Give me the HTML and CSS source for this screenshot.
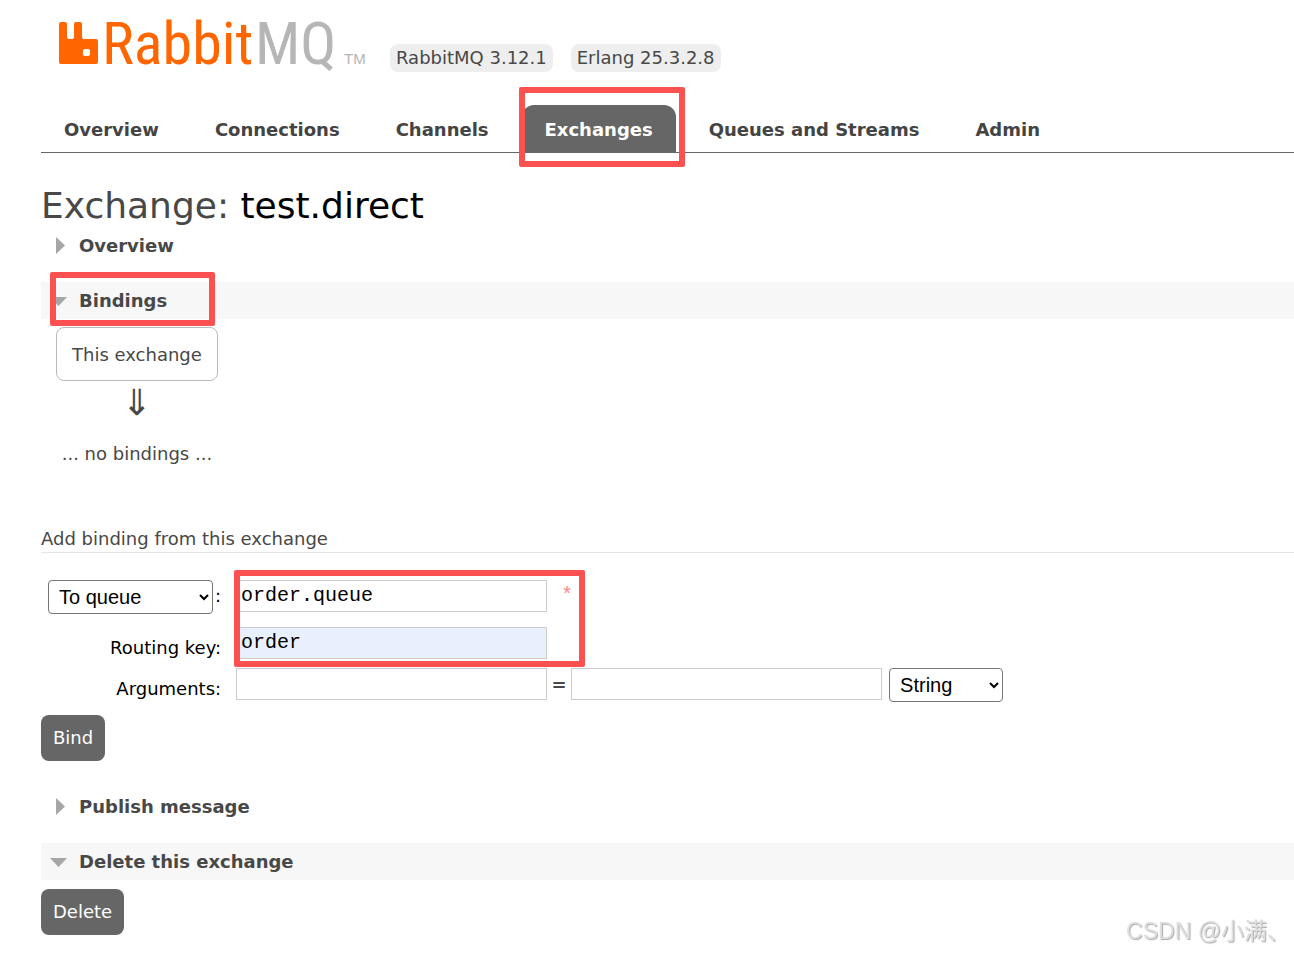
FILE: index.html
```
<!DOCTYPE html>
<html lang="en">

<head>
    <meta charset="UTF-8">
    <meta name="viewport" content="width=device-width, initial-scale=1.0">
    <title>RabbitMQ Management</title>
    <link rel="stylesheet" href="styles.css">
</head>

<body>
    <header>
        <div class="top">
            <a href="#" class="logo">
                <svg width="310" height="60" viewBox="0 0 310 60" role="img" aria-label="RabbitMQ">
                    <path fill="#ff6600" fill-rule="evenodd" d="M3 8h4q2 0 2 2v13q0 2 2 2h3q2 0 2-2V10q0-2 2-2h4q2 0 2 2v13q0 2 2 2h12q2 0 2 2v21q0 2-2 2H3q-2 0-2-2V10q0-2 2-2zM27 35q-2 0-2 2v3q0 2 2 2h3q2 0 2-2v-3q0-2-2-2z" />
                    <text x="44" y="50" class="logo-rabbit">Rabbit</text>
                    <text x="197" y="50" class="logo-mq">MQ</text>
                    <text x="286" y="50" class="logo-tm">TM</text>
                </svg>
            </a>
            <span class="version">RabbitMQ 3.12.1</span>
            <span class="version">Erlang 25.3.2.8</span>
        </div>
        <nav>
            <ul class="tabs">
                <li><a href="#">Overview</a></li>
                <li><a href="#">Connections</a></li>
                <li><a href="#">Channels</a></li>
                <li class="marked"><a href="#" class="selected">Exchanges</a><span class="mark mark-tab"></span></li>
                <li><a href="#">Queues and Streams</a></li>
                <li><a href="#">Admin</a></li>
            </ul>
        </nav>
    </header>

    <main>
        <h1>Exchange: <b>test.direct</b></h1>

        <section>
            <h2><svg class="arrow" width="18" height="18"><path d="M6 0v17l9-8.500z" /></svg>Overview</h2>
        </section>

        <section>
            <h2 class="open marked"><svg class="arrow" width="18" height="18"><path d="M0 5h17l-8.500 9z" /></svg>Bindings<span class="mark mark-bindings"></span></h2>
            <div class="bindings">
                <span class="exchange">This exchange</span>
                <span class="down">&#8659;</span>
                <span>... no bindings ...</span>
            </div>

            <h3>Add binding from this exchange</h3>
            <form>
                <div class="marked">
                    <table class="form">
                        <tr>
                            <th class="type">
                                <select class="type-select" aria-label="Destination type">
                                    <option>To queue</option>
                                    <option>To exchange</option>
                                </select><label for="destination">:</label>
                            </th>
                            <td><input type="text" id="destination" value="order.queue"><span class="mand">*</span></td>
                        </tr>
                        <tr>
                            <th><label for="routing">Routing key:</label></th>
                            <td><input type="text" id="routing" class="filled" value="order"></td>
                        </tr>
                        <tr>
                            <th><label for="argument">Arguments:</label></th>
                            <td>
                                <div class="arguments">
                                    <input type="text" id="argument">
                                    <b class="equals">=</b>
                                    <input type="text" aria-label="Argument value">
                                    <select class="value-select" aria-label="Argument type">
                                        <option>String</option>
                                        <option>Number</option>
                                        <option>Boolean</option>
                                        <option>List</option>
                                    </select>
                                </div>
                            </td>
                        </tr>
                    </table>
                    <span class="mark mark-form"></span>
                </div>
                <button type="button">Bind</button>
            </form>
        </section>

        <section>
            <h2><svg class="arrow" width="18" height="18"><path d="M6 0v17l9-8.500z" /></svg>Publish message</h2>
        </section>

        <section>
            <h2 class="open"><svg class="arrow" width="18" height="18"><path d="M0 5h17l-8.500 9z" /></svg>Delete this exchange</h2>
            <button type="button" class="delete">Delete</button>
        </section>
    </main>

    <div class="watermark">CSDN @小满、</div>
</body>

</html>
```

FILE: styles.css
```
* {
    box-sizing: border-box;
}

body {
    margin: 0;
    padding: 14px 0 18px 41px;
    background-color: white;
    color: #484848;
    font-family: Verdana, "DejaVu Sans", sans-serif;
    font-size: 18px;
    line-height: 20px;
}

/* header */
.top {
    display: flex;
    align-items: flex-end;
    gap: 18px;
    padding-left: 17px;
}

.logo {
    height: 60px;
    margin-right: 4px;
}

.logo svg {
    display: block;
    overflow: visible;
}

.logo-rabbit,
.logo-mq {
    font-family: "Roboto Condensed", "DejaVu Sans Condensed", Lato, sans-serif;
    font-size: 60px;
}

.logo-rabbit {
    fill: #ff6600;
}

.logo-mq,
.logo-tm {
    fill: #b6b6b6;
}

.logo-tm {
    font-family: "Liberation Sans", Arial, sans-serif;
    font-size: 15px;
}

.version {
    padding: 4px 6px;
    margin-bottom: 2px;
    background-color: #eeeeee;
    border-radius: 8px;
}

.tabs {
    display: flex;
    gap: 10px;
    list-style: none;
    margin: 31px 0 0 0;
    padding: 0;
    border-bottom: 1px solid #666666;
}

.tabs a {
    display: block;
    padding: 15px 23px 12px;
    border-radius: 12px 12px 0 0;
    color: #444444;
    font-weight: bold;
    text-decoration: none;
}

.tabs a.selected {
    background-color: #666666;
    color: white;
}

/* red frames */
.marked {
    position: relative;
}

.mark {
    position: absolute;
    border: 6px solid #fc5151;
    border-radius: 2px;
    pointer-events: none;
}

.mark-tab {
    inset: -18px -9px -15px -3px;
}

.mark-bindings {
    top: -10px;
    left: 9px;
    width: 165px;
    height: 54px;
}

.mark-form {
    top: -10px;
    left: 193px;
    width: 351px;
    height: 97px;
}

/* content */
h1 {
    margin: 32px 0 0 0;
    font-size: 36px;
    font-weight: normal;
    line-height: 42px;
}

h1 b {
    color: black;
    font-weight: normal;
}

h2 {
    display: flex;
    align-items: center;
    height: 37px;
    margin: 0 0 18px 0;
    padding: 0 9px;
    font-size: 18px;
}

h2.open {
    background-color: #f7f7f7;
    margin-bottom: 8px;
}

.arrow {
    margin-right: 11px;
    fill: #a6a6a6;
}

.bindings {
    display: inline-flex;
    flex-direction: column;
    align-items: center;
    margin-left: 15px;
}

.exchange {
    padding: 17px 15px 15px;
    border: 1px solid #bbbbbb;
    border-radius: 8px;
}

.down {
    margin: 8px 0 27px;
    font-size: 36px;
    line-height: 28px;
}

h3 {
    margin: 65px 0 27px 0;
    padding-bottom: 3px;
    border-bottom: 1px solid #e4e4e4;
    font-size: 18px;
    font-weight: normal;
}

.form {
    border-collapse: collapse;
}

.form th,
.form td {
    padding: 0 0 9px 0;
    vertical-align: top;
}

.form th {
    padding: 11px 15px 0 7px;
    color: black;
    font-weight: normal;
    text-align: right;
}

.form th.type {
    padding-top: 0;
}

.form tr:first-child td {
    padding-bottom: 15px;
}

.form tr:last-child td {
    padding-bottom: 13px;
}

input {
    display: inline-block;
    width: 311px;
    height: 32px;
    padding: 0 4px 2px;
    border: 1px solid #cccccc;
    vertical-align: top;
    font-family: "Courier New", "Liberation Mono", monospace;
    font-size: 20px;
}

input.filled {
    background-color: #e8f0fe;
}

.mand {
    margin-left: 14px;
    color: #ff8888;
    font-family: "Liberation Mono", monospace;
    font-size: 20px;
    line-height: 32px;
}

.arguments {
    display: flex;
    align-items: flex-start;
}

.equals {
    width: 24px;
    line-height: 34px;
    text-align: center;
}

select {
    height: 34px;
    padding: 0 6px;
    border: 1px solid #767676;
    border-radius: 4px;
    background-color: white;
    color: black;
    font-family: Arial, "Liberation Sans", sans-serif;
    font-size: 20px;
    vertical-align: middle;
}

.type-select {
    width: 165px;
    margin-right: 2px;
}

.value-select {
    width: 114px;
    margin-left: 7px;
}

button {
    display: block;
    padding: 13px 12px;
    border: none;
    border-radius: 8px;
    background-color: #666666;
    color: white;
    font-family: inherit;
    font-size: 18px;
    line-height: 20px;
    cursor: pointer;
}

form button {
    margin-bottom: 27px;
}

.delete {
    margin-top: 9px;
}

.watermark {
    position: fixed;
    right: 4px;
    bottom: 8px;
    color: #dedede;
    font-family: "Liberation Sans", "Noto Sans CJK SC", sans-serif;
    font-size: 23px;
    line-height: 28px;
    text-shadow: 1px 1px 1px #aaaaaa;
}
```
